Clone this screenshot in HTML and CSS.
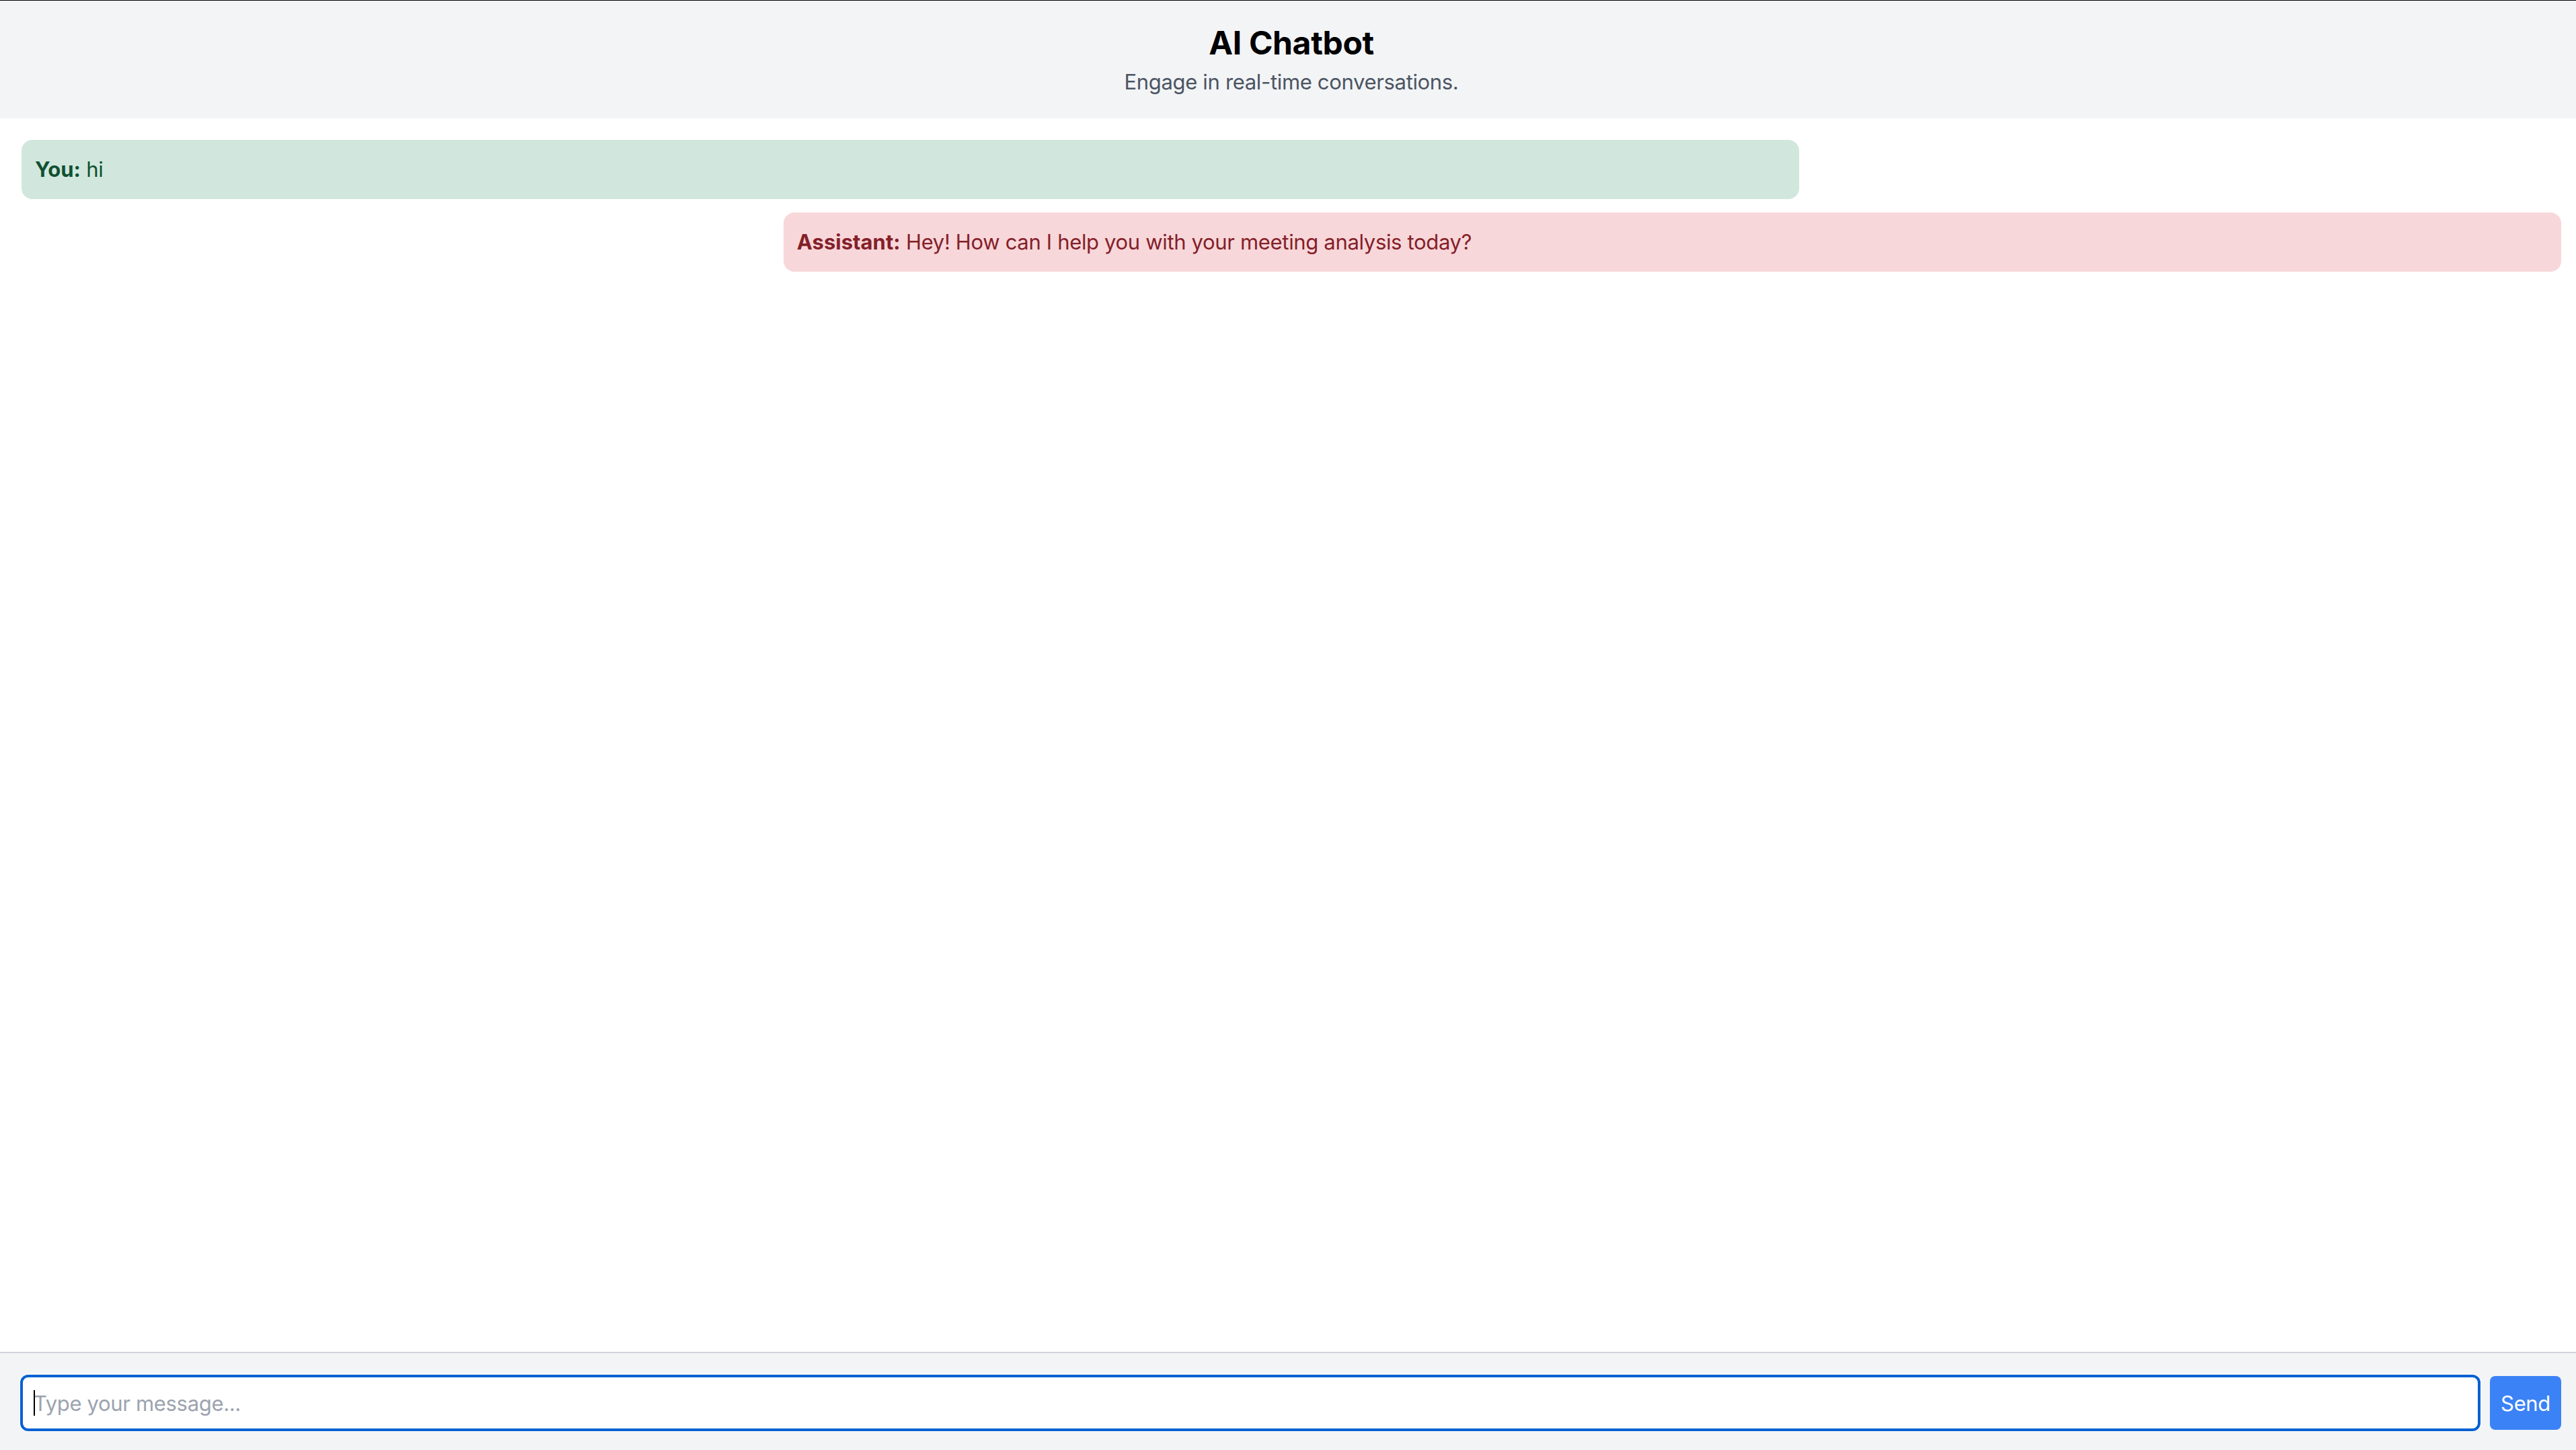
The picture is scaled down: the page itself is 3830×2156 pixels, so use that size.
FILE: index.html
```html
<!DOCTYPE html>
<html lang="en">
<head>
<meta charset="utf-8">
<title>AI Chatbot</title>
<link rel="stylesheet" href="styles.css">
</head>
<body>
<div class="app">
  <header class="header">
    <h1 class="title">AI Chatbot</h1>
    <p class="subtitle">Engage in real-time conversations.</p>
  </header>
  <main class="messages">
    <div class="msg msg-user"><strong>You:</strong> hi</div>
    <div class="msg msg-bot"><strong>Assistant:</strong> Hey! How can I help you with your meeting analysis today?</div>
  </main>
  <footer class="composer">
    <div class="input-wrap">
      <input class="input" type="text" placeholder="Type your message...">
      <span class="caret"></span>
    </div>
    <button class="send" type="button">Send</button>
  </footer>
</div>
</body>
</html>
```
FILE: styles.css
```css
html, body {
  margin: 0;
  padding: 0;
  overflow: hidden;
  background: #ffffff;
}

.app {
  width: 3840px;
  height: 2156px;
  box-sizing: border-box;
  border-top: 1px solid #000000;
  display: flex;
  flex-direction: column;
  font-family: Inter, "Noto Sans", "Liberation Sans", sans-serif;
  letter-spacing: -0.021em;
}

.header {
  background: #f3f4f6;
  padding: 31px 32px 30px;
  text-align: center;
}

.title {
  margin: 0;
  font-size: 48px;
  line-height: 64px;
  font-weight: 700;
  color: #000000;
}

.subtitle {
  margin: 2px 0 0;
  font-size: 31px;
  line-height: 48px;
  color: #4b5563;
}

.messages {
  flex: 1;
  min-height: 0;
  overflow: hidden;
  background: #ffffff;
  padding: 32px;
  display: flex;
  flex-direction: column;
  align-items: flex-start;
  gap: 20px;
}

.msg {
  width: 70%;
  box-sizing: border-box;
  padding: 20px;
  border-radius: 16px;
  font-size: 31px;
  line-height: 48px;
}

.msg strong {
  font-weight: 700;
  letter-spacing: 0;
}

.msg-user {
  background: #d1e7dd;
  color: #0f5132;
}

.msg-bot {
  align-self: flex-end;
  background: #f8d7da;
  color: #842029;
}

.composer {
  background: #f3f4f6;
  border-top: 2px solid #d1d5db;
  padding: 34px 32px 30px;
  display: flex;
  align-items: center;
  gap: 16px;
}

.input-wrap {
  flex: 1;
  position: relative;
  display: flex;
}

.input {
  flex: 1;
  height: 80px;
  box-sizing: border-box;
  border: 2px solid #0561d1;
  border-radius: 10px;
  box-shadow: 0 0 0 2px #0561d1, 0 0 0 3px #ffffff;
  outline: none;
  padding: 0 16px;
  font-family: inherit;
  font-size: 31px;
  letter-spacing: inherit;
  color: #111827;
  background: #ffffff;
}

.input::placeholder {
  color: #9ca3af;
}

.caret {
  position: absolute;
  left: 18px;
  top: 21px;
  width: 2px;
  height: 38px;
  background: #000000;
}

.send {
  height: 80px;
  padding: 0 16px;
  border: none;
  border-radius: 8px;
  background: #3b82f6;
  color: #ffffff;
  font-family: inherit;
  font-size: 31px;
  letter-spacing: inherit;
}
```
